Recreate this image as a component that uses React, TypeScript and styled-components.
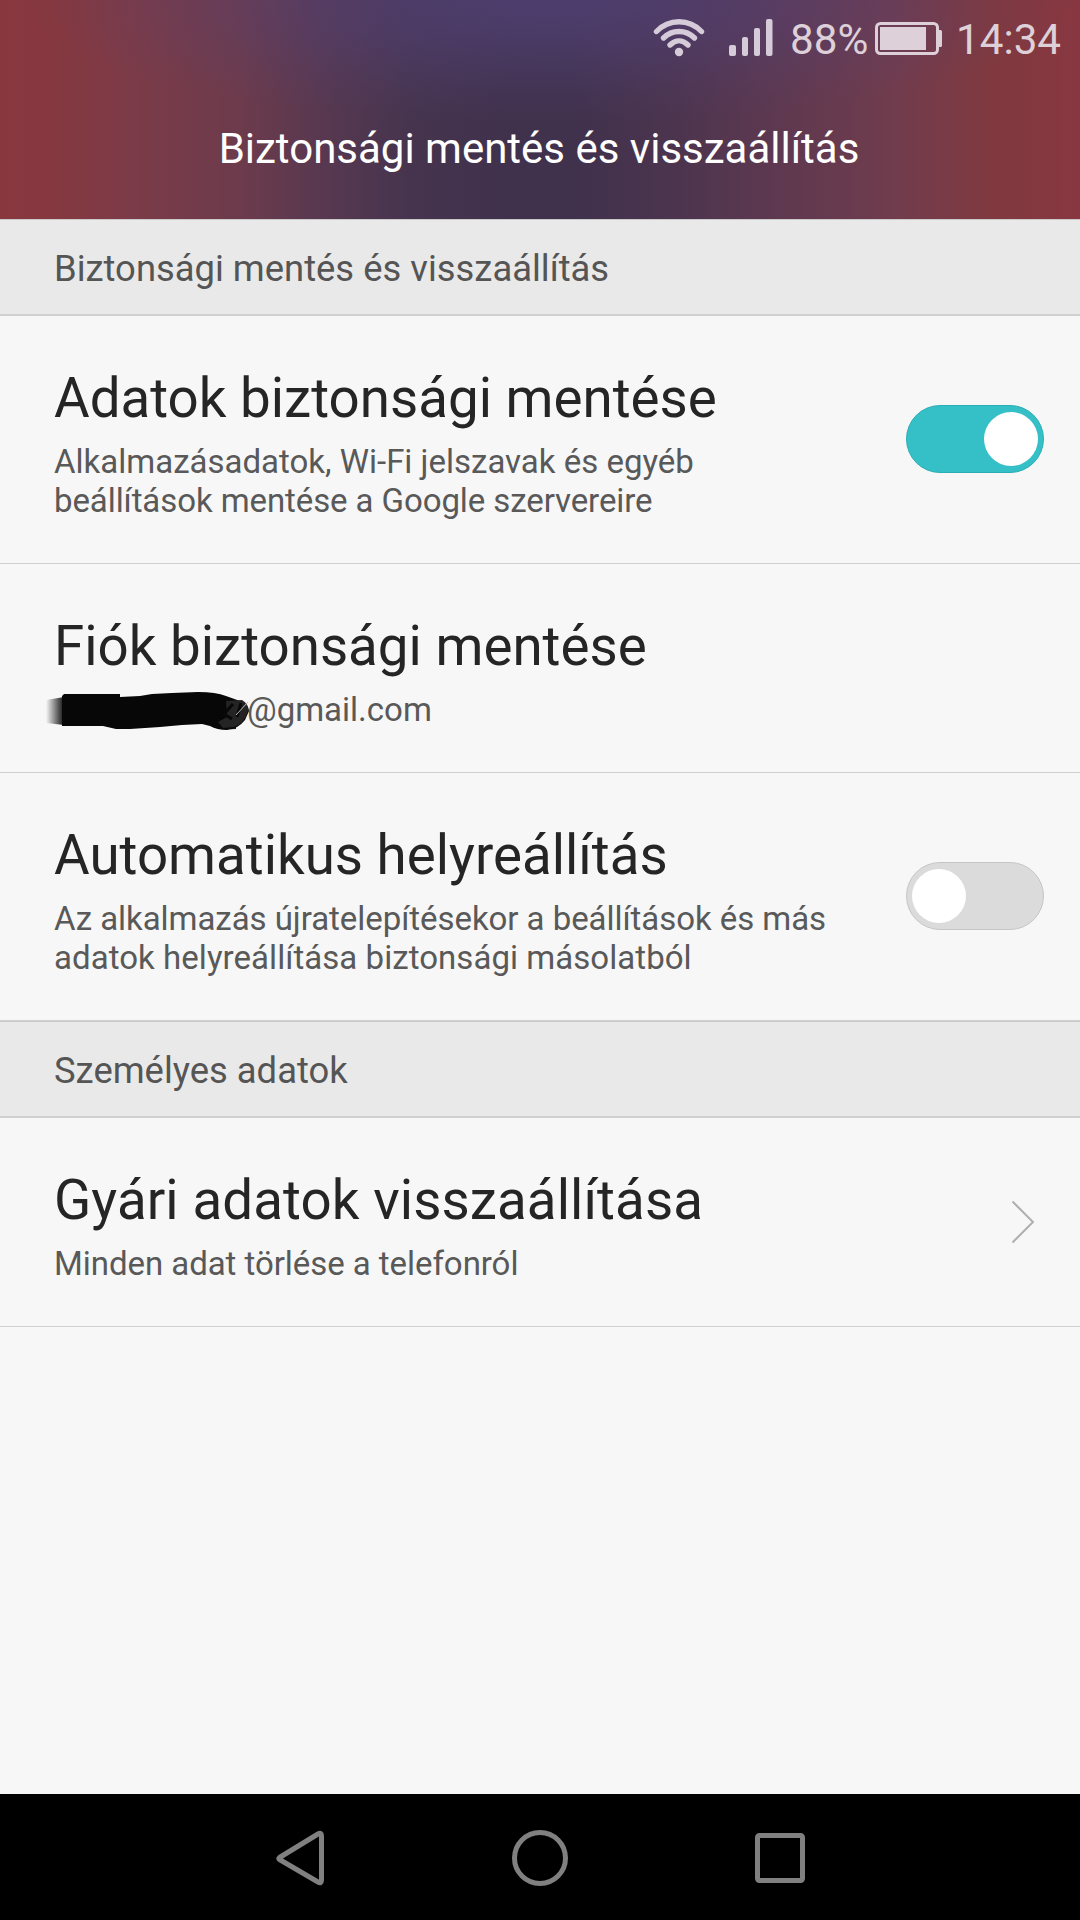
import React from 'react';
import styled, { createGlobalStyle } from 'styled-components';

const GlobalStyle = createGlobalStyle`
  * { box-sizing: border-box; }
  body { margin: 0; background: #f7f7f7; font-family: Roboto, 'Noto Sans', sans-serif; }
`;

const Screen = styled.div`
  width: 1080px;
  height: 1920px;
  display: flex;
  flex-direction: column;
  background: #f7f7f7;
  overflow: hidden;
`;

const Header = styled.header`
  height: 219px;
  display: flex;
  flex-direction: column;
  background:
    radial-gradient(ellipse 520px 125px at 51% 0%, rgba(82, 66, 122, 0.75) 0%, rgba(82, 66, 122, 0.5) 35%, rgba(82, 66, 122, 0.15) 75%, rgba(82, 66, 122, 0) 100%),
    linear-gradient(90deg, #89373f 0%, #85383f 5%, #7c3b48 12%, #6d3b4c 22%, #573850 30%, #46344e 38%, #40314c 47%, #40314c 53%, #4b344e 62%, #5c3850 71%, #713c4d 83%, #80393f 92%, #883741 100%);
`;

const StatusBar = styled.div`
  height: 75px;
  display: flex;
  justify-content: flex-end;
  color: #ddd0d8;
`;

const StatusText = styled.span<{ $width: number }>`
  width: ${(p) => p.$width}px;
  padding-top: 15px;
  font-size: 42.2px;
  line-height: 50px;
  white-space: nowrap;
`;

const StatusIcons = styled.svg`
  flex: none;
`;

const PageTitle = styled.h1`
  margin: 0;
  height: 144px;
  padding: 49px 2px 0 0;
  text-align: center;
  color: #fff;
  font-size: 42px;
  line-height: 50px;
  font-weight: 400;
`;

const SectionHeader = styled.h2`
  margin: 0;
  height: 97px;
  padding: 28px 54px 0;
  border-top: 1px solid #c9c9c9;
  border-bottom: 2px solid #d0d0d0;
  background: #e9e9e9;
  color: #555;
  font-size: 36.4px;
  line-height: 42px;
  font-weight: 400;
`;

const Row = styled.div<{ $height: number }>`
  height: ${(p) => p.$height}px;
  display: flex;
  align-items: center;
  justify-content: space-between;
  padding: 0 36px 0 54px;
  border-bottom: 1px solid #d0d0d0;
`;

const RowText = styled.div`
  display: flex;
  flex-direction: column;
  gap: 12px;
  padding-top: 7px;
`;

const RowTitle = styled.div<{ $tracking?: number }>`
  color: #252525;
  font-size: 54.7px;
  line-height: 64px;
  letter-spacing: ${(p) => p.$tracking ?? 0}px;
  white-space: nowrap;
`;

const Summary = styled.div`
  color: #595959;
  font-size: 33px;
  line-height: 39px;
`;

const SummaryLine = styled.div<{ $tracking?: number }>`
  letter-spacing: ${(p) => p.$tracking ?? 0}px;
  white-space: nowrap;
`;

const Email = styled.div`
  position: relative;
  padding-left: 193px;
`;

const Scribble = styled.svg`
  position: absolute;
  left: -10px;
  top: -3px;
`;

const Switch = styled.div<{ $on: boolean }>`
  width: 138px;
  height: 68px;
  display: flex;
  align-items: center;
  justify-content: ${(p) => (p.$on ? 'flex-end' : 'flex-start')};
  margin-bottom: 2px;
  padding: 0 5px;
  border: 1px solid ${(p) => (p.$on ? '#2aafb4' : '#c6c6c6')};
  border-radius: 34px;
  background: ${(p) => (p.$on ? '#35bfc6' : '#dbdbdb')};
`;

const Knob = styled.div`
  width: 54px;
  height: 54px;
  border-radius: 50%;
  background: #fff;
`;

const Chevron = styled.svg`
  margin-right: 8px;
`;

const NavBar = styled.nav`
  height: 126px;
  margin-top: auto;
  background: #000;
  display: flex;
  justify-content: center;
`;

const NavIcon = styled.svg`
  width: 240px;
  height: 126px;
  fill: none;
  stroke: #808080;
  stroke-width: 5;
  stroke-linejoin: round;
`;

const Toggle = ({ on }: { on: boolean }) => (
  <Switch $on={on} role="switch" aria-checked={on}>
    <Knob />
  </Switch>
);

export default function App() {
  return (
    <>
      <GlobalStyle />
      <Screen>
        <Header>
          <StatusBar>
            <StatusIcons width="141" height="75" viewBox="649 0 141 75">
              <g fill="none" stroke="#d6cbd8" strokeWidth="5.4" strokeLinecap="round">
                <path d="M656.5 31.5C669 18.5 689 18.5 701.500 31.500" />
                <path d="M663.500 38C672 29.300 686 29.300 694.500 38" />
                <path d="M670 45C675.500 39.500 682.500 39.500 688 45" />
              </g>
              <g fill="#d6cbd8">
                <circle cx="679" cy="52" r="4.200" />
                <rect x="729" y="45" width="7" height="11" rx="2" />
                <rect x="742" y="37" width="6" height="19" rx="2" />
                <rect x="754" y="28" width="6" height="28" rx="2" />
                <rect x="766" y="19" width="6.500" height="37" rx="2" />
              </g>
            </StatusIcons>
            <StatusText $width={84}>88%</StatusText>
            <StatusIcons width="82" height="75" viewBox="874 0 82 75">
              <rect x="876.500" y="23.500" width="61" height="30" rx="4" fill="none" stroke="#ddd0d8" strokeWidth="3" />
              <path fill="#ddd0d8" d="M880 27h46v23h-46zM939 30h1.500q1.500 0 1.500 1.500v14q0 1.500-1.500 1.500H939z" />
            </StatusIcons>
            <StatusText $width={124}>14:34</StatusText>
          </StatusBar>
          <PageTitle>Biztonsági mentés és visszaállítás</PageTitle>
        </Header>

        <SectionHeader>Biztonsági mentés és visszaállítás</SectionHeader>
        <Row $height={248}>
          <RowText>
            <RowTitle>Adatok biztonsági mentése</RowTitle>
            <Summary>
              <SummaryLine>Alkalmazásadatok, Wi-Fi jelszavak és egyéb</SummaryLine>
              <SummaryLine $tracking={-0.09}>beállítások mentése a Google szervereire</SummaryLine>
            </Summary>
          </RowText>
          <Toggle on />
        </Row>
        <Row $height={209}>
          <RowText>
            <RowTitle>Fiók biztonsági mentése</RowTitle>
            <Summary>
              <Email>
                @gmail.com
                <Scribble width="210" height="46" viewBox="44 688 210 46">
                  <defs>
                    <linearGradient id="fade">
                      <stop offset="0" stopColor="#111" stopOpacity="0" />
                      <stop offset="1" stopColor="#111" />
                    </linearGradient>
                  </defs>
                  <path fill="url(#fade)" d="M46 701l18-3v28l-18-2z" />
                  <path fill="url(#fade)" d="M212 722h24v8q-14 1-24-5z" />
                  <path fill="#070707" d="M62 697l2-2h56v3l20-1 12-2 20-1 26-1q18 0 28 4l14 5q9 4 9 10l-4 9q-7 9-18 10-10 0-17-4l-8-2-20 1-22 2-30 2H116l-13-3H62z" />
                  <path fill="#242424" d="M226 702l16-1q7 4 6 11-4 13-14 16l-11 1-5-6 9-5z" />
                  <path fill="none" stroke="#080808" strokeWidth="3" d="M233 705l-9 10 8 5M241 704l-4 14" />
                  <path fill="none" stroke="#bbb" strokeWidth="1" d="M236 716l12-13" />
                </Scribble>
              </Email>
            </Summary>
          </RowText>
        </Row>
        <Row $height={248}>
          <RowText>
            <RowTitle>Automatikus helyreállítás</RowTitle>
            <Summary>
              <SummaryLine $tracking={-0.05}>Az alkalmazás újratelepítésekor a beállítások és más</SummaryLine>
              <SummaryLine $tracking={0.05}>adatok helyreállítása biztonsági másolatból</SummaryLine>
            </Summary>
          </RowText>
          <Toggle on={false} />
        </Row>

        <SectionHeader>Személyes adatok</SectionHeader>
        <Row $height={209}>
          <RowText>
            <RowTitle $tracking={0.09}>Gyári adatok visszaállítása</RowTitle>
            <Summary>
              <SummaryLine $tracking={-0.05}>Minden adat törlése a telefonról</SummaryLine>
            </Summary>
          </RowText>
          <Chevron width="26" height="46" viewBox="1010 1199 26 46" fill="none" stroke="#b0b0b0" strokeWidth="2">
            <path d="M1012.500 1201.500L1033 1222L1012.500 1242.500" />
          </Chevron>
        </Row>

        <NavBar>
          <NavIcon viewBox="180 1794 240 126">
            <path d="M279.500 1857.500L318 1834Q321.500 1832 321.500 1836V1880Q321.500 1884 318 1882L279.500 1859.500Q278 1858.500 279.500 1857.500Z" />
          </NavIcon>
          <NavIcon viewBox="420 1794 240 126">
            <circle cx="540" cy="1858" r="25.500" />
          </NavIcon>
          <NavIcon viewBox="660 1794 240 126">
            <rect x="757.500" y="1835.500" width="45" height="45" rx="2" />
          </NavIcon>
        </NavBar>
      </Screen>
    </>
  );
}
